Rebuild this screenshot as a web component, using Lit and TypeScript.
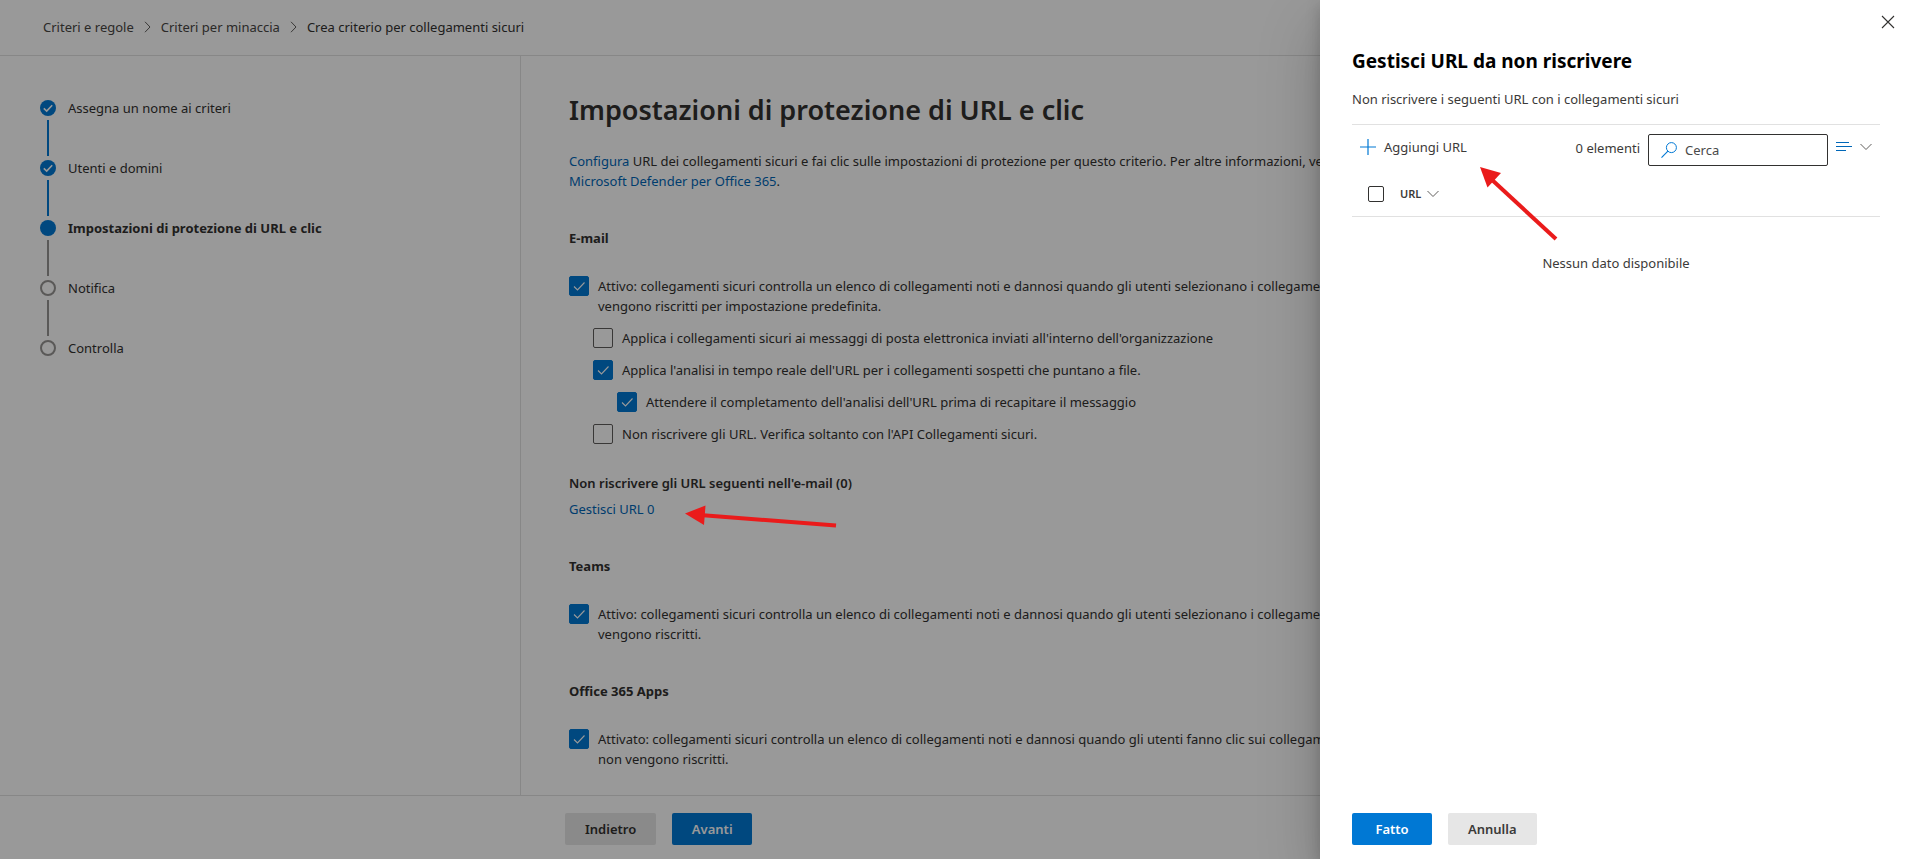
import { LitElement, html, css, svg, nothing } from "lit";
import { customElement, property } from "lit/decorators.js";

const check = svg`<path d="M5 10.500 8.500 14 15.500 6.500" fill="none" stroke="#fff" stroke-width="1.1"/>`;

const chevronDown = html`<svg class="chevron" width="12" height="8" viewBox="0 0 12 8" aria-hidden="true">
  <path d="M.5 1 6 6.5 11.5 1" fill="none" stroke="currentColor" stroke-width="1" />
</svg>`;

const base = css`
  * {
    box-sizing: border-box;
  }
  h1, h2, h3, p, ol, ul {
    margin: 0;
    padding: 0;
    font-size: inherit;
  }
  ol, ul {
    list-style: none;
  }
  a {
    color: #0067b8;
    text-decoration: none;
  }
  button {
    font: inherit;
    color: inherit;
    background: none;
    border: 0;
    padding: 0;
    cursor: pointer;
  }
  .btn {
    height: 32px;
    min-width: 80px;
    padding: 0 20px;
    border-radius: 2px;
    background: #e6e6e6;
    font-weight: 600;
  }
  .btn.primary {
    padding: 0 16px;
    background: #0078d4;
    color: #fff;
  }
`;

@customElement("check-option")
class CheckOption extends LitElement {
  @property({ type: Boolean }) checked = false;
  @property({ type: Number }) level = 0;

  static styles = [
    base,
    css`
      :host {
        display: block;
      }
      label {
        display: grid;
        grid-template-columns: 20px 1fr;
        column-gap: 9px;
        align-items: start;
      }
      .level1 {
        margin-left: 24px;
      }
      .level2 {
        margin-left: 48px;
      }
      input,
      svg {
        grid-area: 1 / 1;
        width: 20px;
        height: 20px;
        margin: 0;
      }
      input {
        appearance: none;
        border: 1px solid #605e5c;
        border-radius: 2px;
      }
      input:checked {
        background: #0078d4;
        border-color: #0078d4;
      }
      svg {
        pointer-events: none;
      }
    `,
  ];

  render() {
    return html`<label class="level${this.level}">
      <input type="checkbox" .checked=${this.checked} />
      ${this.checked ? html`<svg viewBox="0 0 20 20" aria-hidden="true">${check}</svg>` : nothing}
      <span><slot></slot></span>
    </label>`;
  }
}

@customElement("wizard-steps")
class WizardSteps extends LitElement {
  steps = [
    { label: "Assegna un nome ai criteri", state: "done" },
    { label: "Utenti e domini", state: "done" },
    { label: "Impostazioni di protezione di URL e clic", state: "current" },
    { label: "Notifica", state: "todo" },
    { label: "Controlla", state: "todo" },
  ];

  static styles = [
    base,
    css`
      :host {
        display: block;
      }
      li {
        display: grid;
        grid-template-columns: 16px 1fr;
        column-gap: 12px;
        height: 60px;
        line-height: 16px;
        grid-template-rows: 16px 36px;
        row-gap: 4px;
        color: #323130;
      }
      .dot {
        width: 16px;
        height: 16px;
        border-radius: 50%;
        background: #0078d4;
      }
      .todo .dot {
        background: none;
        border: 2px solid #979593;
      }
      .dot svg {
        display: block;
      }
      .line {
        width: 2px;
        justify-self: center;
        background: #979593;
      }
      .done .line {
        background: #0078d4;
      }
      li:last-child .line {
        display: none;
      }
      .current {
        font-weight: 700;
      }
    `,
  ];

  render() {
    return html`<ol>
      ${this.steps.map(
        (s) => html`<li class=${s.state}>
          <span class="dot">
            ${s.state === "done"
              ? html`<svg width="16" height="16" viewBox="0 0 16 16" aria-hidden="true">
                  <path d="M3.800 8.300 6.700 11 12.200 5.200" fill="none" stroke="#fff" stroke-width="1.6" />
                </svg>`
              : nothing}
          </span>
          <span>${s.label}</span>
          <span class="line"></span>
        </li>`
      )}
    </ol>`;
  }
}

@customElement("url-panel")
class UrlPanel extends LitElement {
  static styles = [
    base,
    css`
      :host {
        display: flex;
        flex-direction: column;
        background: #fff;
        color: #3b3a39;
        padding: 0 31px 14px 32px;
        box-shadow: 0 26px 58px rgba(0, 0, 0, 0.22), 0 5px 14px rgba(0, 0, 0, 0.18);
      }
      .top {
        display: flex;
        justify-content: flex-end;
        height: 44px;
        margin: 0 -15px 1px 0;
      }
      .close svg {
        display: block;
      }
      h2 {
        font-size: 19px;
        line-height: 32px;
        font-weight: 700;
        color: #000;
      }
      .hint {
        margin-top: 12px;
        line-height: 20px;
      }
      .toolbar {
        display: flex;
        align-items: flex-start;
        height: 50px;
        margin-top: 15px;
        border-top: 1px solid #e1e1e1;
        padding: 9px 0 0 8px;
        position: relative;
      }
      .add {
        display: flex;
        align-items: center;
        gap: 8px;
        height: 26px;
        margin-right: auto;
      }
      .count {
        line-height: 28px;
      }
      .search {
        display: flex;
        align-items: center;
        gap: 8px;
        width: 180px;
        height: 32px;
        margin: 0 8px;
        padding: 0 12px;
        border: 1px solid #323130;
        border-radius: 2px;
      }
      .search svg {
        flex: none;
      }
      .search input {
        font: inherit;
        color: inherit;
        border: 0;
        outline: 0;
        padding: 0;
        min-width: 0;
        width: 100%;
        background: none;
      }
      .search input::placeholder {
        color: #4a4a4a;
        opacity: 1;
      }
      .group {
        display: flex;
        align-items: center;
        gap: 8px;
        margin-right: 8px;
        height: 26px;
      }
      .chevron {
        display: block;
        color: #605e5c;
      }
      .arrow {
        position: absolute;
        left: 122px;
        top: 39px;
        pointer-events: none;
      }
      table {
        width: 100%;
        border-collapse: collapse;
      }
      th {
        height: 42px;
        padding: 0 0 2px;
        text-align: left;
        border-bottom: 1px solid #e1e1e1;
        font-size: 11px;
        font-weight: 600;
      }
      .pick {
        width: 48px;
        padding-left: 16px;
      }
      .pick input {
        appearance: none;
        display: block;
        width: 16px;
        height: 16px;
        margin: 0;
        border: 1px solid #323130;
        border-radius: 2px;
      }
      .sort {
        display: flex;
        align-items: center;
        gap: 6px;
      }
      td {
        padding: 36px 0 0;
        line-height: 20px;
        text-align: center;
      }
      .actions {
        display: flex;
        gap: 16px;
        margin-top: auto;
      }
    `,
  ];

  render() {
    return html`
      <div class="top">
        <button class="close" aria-label="Chiudi">
          <svg width="14" height="14" viewBox="0 0 14 14" aria-hidden="true">
            <path d="M1 1 13 13M13 1 1 13" stroke="#323130" stroke-width="1.1" />
          </svg>
        </button>
      </div>
      <h2>Gestisci URL da non riscrivere</h2>
      <p class="hint">Non riscrivere i seguenti URL con i collegamenti sicuri</p>
      <div class="toolbar">
        <button class="add">
          <svg width="16" height="16" viewBox="0 0 16 16" aria-hidden="true">
            <path d="M8 0V16M0 8H16" stroke="#0078d4" stroke-width="1.2" />
          </svg>
          Aggiungi URL
        </button>
        <span class="count">0 elementi</span>
        <label class="search">
          <svg width="16" height="16" viewBox="0 0 16 16" aria-hidden="true">
            <circle cx="10.4" cy="5.6" r="5" fill="none" stroke="#0078d4" />
            <path d="M6.9 9.2.5 15.6" stroke="#0078d4" stroke-width="1.1" />
          </svg>
          <input type="text" placeholder="Cerca" aria-label="Cerca" />
        </label>
        <button class="group" aria-label="Raggruppa">
          <svg width="16" height="12" viewBox="0 0 16 12" aria-hidden="true">
            <path d="M0 1.500H13M0 5.500H16M0 9.500H10" stroke="#0067b8" />
          </svg>
          ${chevronDown}
        </button>
        <svg class="arrow" width="90" height="84" viewBox="0 0 90 84" aria-hidden="true">
          <path d="M16 14 82 75" stroke="#ea1b1b" stroke-width="4" />
          <path d="M6 3 27 9 13.500 23.500Z" fill="#ea1b1b" />
        </svg>
      </div>
      <table>
        <thead>
          <tr>
            <th class="pick"><input type="checkbox" aria-label="Seleziona tutto" /></th>
            <th><button class="sort">URL ${chevronDown}</button></th>
          </tr>
        </thead>
        <tbody>
          <tr><td colspan="2">Nessun dato disponibile</td></tr>
        </tbody>
      </table>
      <div class="actions">
        <button class="btn primary">Fatto</button>
        <button class="btn">Annulla</button>
      </div>
    `;
  }
}

@customElement("app-root")
class AppRoot extends LitElement {
  static styles = [
    base,
    css`
      :host {
        display: flex;
        flex-direction: column;
        height: 100vh;
        overflow: hidden;
        position: relative;
        background: #fff;
        color: #323130;
        font: 13px/20px "Segoe UI", "Noto Sans", "Open Sans", sans-serif;
      }
      header {
        display: flex;
        align-items: center;
        height: 56px;
        padding: 0 43px 2px;
        border-bottom: 1px solid #e1e1e1;
      }
      .crumbs {
        display: flex;
        align-items: center;
        gap: 10px;
      }
      .crumbs li {
        display: flex;
        align-items: center;
        gap: 10px;
      }
      .crumbs a {
        color: #484644;
      }
      .body {
        flex: 1;
        min-height: 0;
        display: grid;
        grid-template-columns: 521px 1fr;
      }
      nav.steps {
        padding: 44px 40px;
        border-right: 1px solid #e1e1e1;
      }
      main {
        padding: 36px 40px 0 48px;
        overflow: hidden;
      }
      h1 {
        font-size: 27px;
        line-height: 36px;
        font-weight: 600;
      }
      .intro {
        margin-top: 23px;
      }
      h3 {
        font-weight: 700;
      }
      section {
        margin-top: 37px;
      }
      .options {
        display: flex;
        flex-direction: column;
        gap: 12px;
        margin-top: 28px;
      }
      .sub {
        margin-top: 29px;
        font-weight: 600;
      }
      .manage {
        display: block;
        margin-top: 6px;
      }
      footer {
        display: flex;
        gap: 16px;
        height: 64px;
        padding: 17px 0 0 565px;
        border-top: 1px solid #e1e1e1;
      }
      .backdrop {
        position: absolute;
        inset: 0;
        background: rgba(0, 0, 0, 0.4);
      }
      url-panel {
        position: absolute;
        inset: 0 0 0 auto;
        width: min(591px, 100%);
      }
      .arrow {
        position: absolute;
        left: 680px;
        top: 500px;
        pointer-events: none;
      }
    `,
  ];

  render() {
    const sep = html`<svg width="7" height="12" viewBox="0 0 7 12" aria-hidden="true">
      <path d="M1 .8 6 6 1 11.2" fill="none" stroke="#605e5c" />
    </svg>`;
    return html`
      <header>
        <nav aria-label="Percorso">
          <ol class="crumbs">
            <li><a href="#">Criteri e regole</a>${sep}</li>
            <li><a href="#">Criteri per minaccia</a>${sep}</li>
            <li>Crea criterio per collegamenti sicuri</li>
          </ol>
        </nav>
      </header>
      <div class="body">
        <nav class="steps" aria-label="Passaggi"><wizard-steps></wizard-steps></nav>
        <main>
          <h1>Impostazioni di protezione di URL e clic</h1>
          <p class="intro">
            <a href="#">Configura</a> URL dei collegamenti sicuri e fai clic sulle impostazioni di
            protezione per questo criterio. Per altre informazioni, vedi<br />
            <a href="#">Microsoft Defender per Office 365</a>.
          </p>
          <section>
            <h3>E-mail</h3>
            <div class="options">
              <check-option checked
                >Attivo: collegamenti sicuri controlla un elenco di collegamenti noti e dannosi
                quando gli utenti selezionano i collegamenti<br />vengono riscritti per impostazione
                predefinita.</check-option
              >
              <check-option level="1"
                >Applica i collegamenti sicuri ai messaggi di posta elettronica inviati all'interno
                dell'organizzazione</check-option
              >
              <check-option level="1" checked
                >Applica l'analisi in tempo reale dell'URL per i collegamenti sospetti che puntano a
                file.</check-option
              >
              <check-option level="2" checked
                >Attendere il completamento dell'analisi dell'URL prima di recapitare il
                messaggio</check-option
              >
              <check-option level="1"
                >Non riscrivere gli URL. Verifica soltanto con l'API Collegamenti
                sicuri.</check-option
              >
            </div>
            <p class="sub">Non riscrivere gli URL seguenti nell'e-mail (0)</p>
            <a class="manage" href="#">Gestisci URL 0</a>
          </section>
          <section>
            <h3>Teams</h3>
            <div class="options">
              <check-option checked
                >Attivo: collegamenti sicuri controlla un elenco di collegamenti noti e dannosi
                quando gli utenti selezionano i collegamenti<br />vengono riscritti.</check-option
              >
            </div>
          </section>
          <section>
            <h3>Office 365 Apps</h3>
            <div class="options">
              <check-option checked
                >Attivato: collegamenti sicuri controlla un elenco di collegamenti noti e dannosi
                quando gli utenti fanno clic sui collegamenti<br />non vengono
                riscritti.</check-option
              >
            </div>
          </section>
        </main>
      </div>
      <footer>
        <button class="btn">Indietro</button>
        <button class="btn primary">Avanti</button>
      </footer>
      <div class="backdrop"></div>
      <svg class="arrow" width="160" height="36" viewBox="0 0 160 36" aria-hidden="true">
        <path d="M20 15 156 25.500" stroke="#ea1b1b" stroke-width="4" />
        <path d="M5 13.500 25.500 5.500 24 25Z" fill="#ea1b1b" />
      </svg>
      <url-panel role="dialog" aria-label="Gestisci URL da non riscrivere"></url-panel>
    `;
  }
}
